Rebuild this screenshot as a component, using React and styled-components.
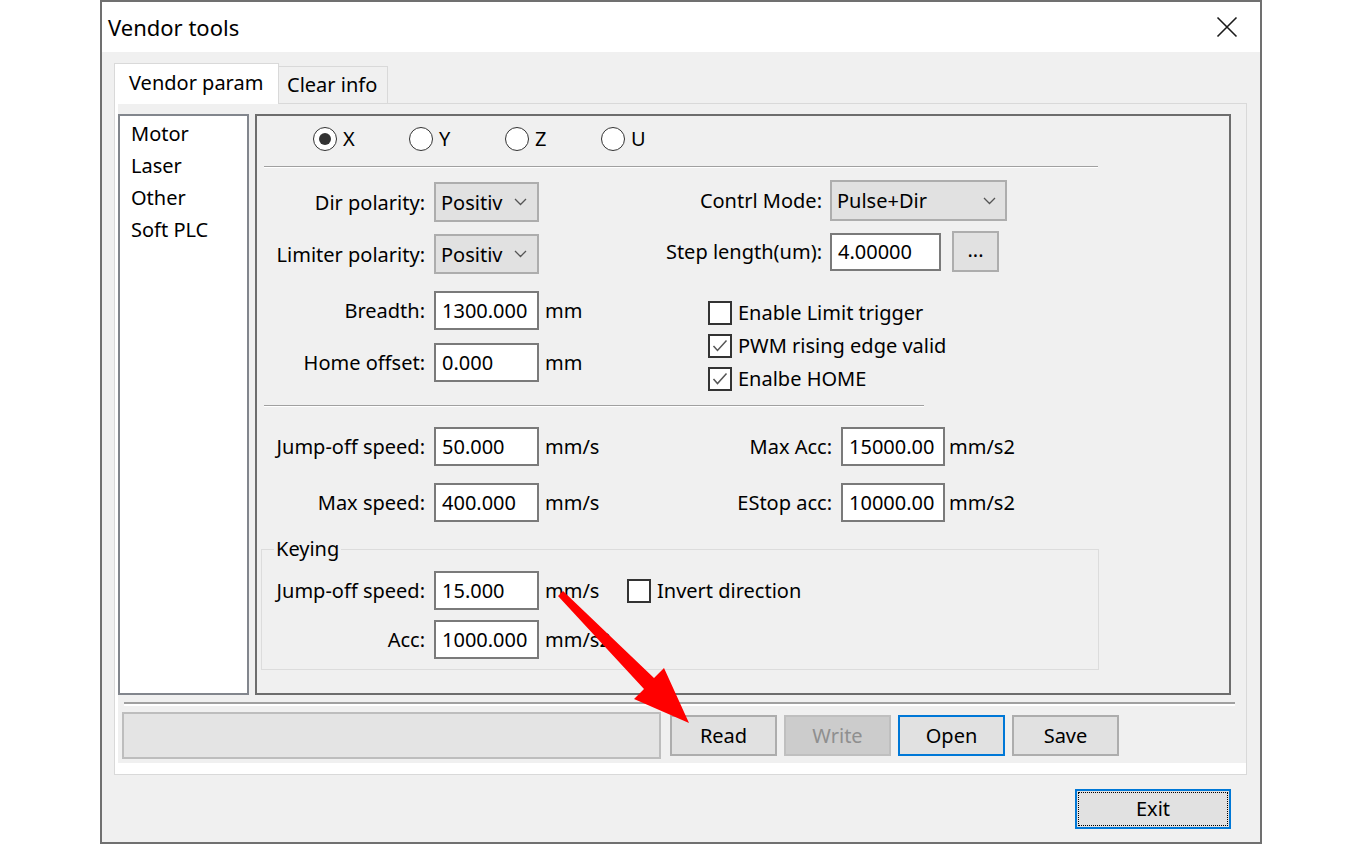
import React from 'react';
import styled, { createGlobalStyle } from 'styled-components';

const GlobalStyle = createGlobalStyle`
  html, body { margin: 0; padding: 0; background: #fff; }
  body {
    font-family: "Noto Sans", "Liberation Sans", sans-serif;
    font-size: 20px;
    color: #000;
  }
  * { box-sizing: border-box; }
`

const Page = styled.div`
  position: relative;
  width: 1362px;
  height: 844px;
  display: flex;
  justify-content: center;
  overflow: hidden;
`

const Window = styled.div`
  width: 1162px;
  height: 844px;
  border: 2px solid #707070;
  background: #f0f0f0;
  display: flex;
  flex-direction: column;
`

const TitleBar = styled.div`
  height: 50px;
  background: #fff;
  display: flex;
  align-items: center;
  justify-content: space-between;
  padding-left: 6px;
`

const Title = styled.div`
  font-size: 22px;
  line-height: 26px;
`

const CloseBtn = styled.div`
  width: 66px;
  height: 50px;
  display: flex;
  align-items: center;
  justify-content: center;
`

const Body = styled.div`
  flex: 1;
  display: flex;
  flex-direction: column;
  padding: 11px 13px 0 12px;
`

const TabStrip = styled.div`
  display: flex;
  align-items: flex-end;
  height: 40px;
`

const Tab = styled.div`
  position: relative;
  z-index: 1;
  height: ${p => (p.$active ? '41px' : '37px')};
  margin-bottom: ${p => (p.$active ? '-1px' : '0')};
  width: ${p => p.$w}px;
  padding-left: ${p => (p.$active ? '14px' : '8px')};
  padding-bottom: ${p => (p.$active ? '3px' : '0')};
  background: ${p => (p.$active ? '#fff' : '#f0f0f0')};
  border: 1px solid #d9d9d9;
  border-bottom: none;
  border-left: ${p => (p.$active ? '1px solid #d9d9d9' : 'none')};
  display: flex;
  align-items: center;
  line-height: 24px;
`

const TabPanel = styled.div`
  height: 672px;
  border: 1px solid #d9d9d9;
  background: #fff;
  padding: 0 0 11px 3px;
  display: flex;
`

const PanelInner = styled.div`
  flex: 1;
  background: #f0f0f0;
  display: flex;
  flex-direction: column;
  padding: 10px 15px 0 0;
`

const MainRow = styled.div`
  display: flex;
  gap: 6px;
  height: 581px;
`

const NavList = styled.div`
  width: 131px;
  background: #fff;
  border: 2px solid #82868d;
  padding: 2px 0 0 11px;
`

const NavItem = styled.div`
  line-height: 32px;
  white-space: nowrap;
`

const Group = styled.div`
  flex: 1;
  border: 2px solid #6d6d6d;
  display: flex;
  flex-direction: column;
`

const RadioRow = styled.div`
  display: flex;
  margin-top: 11px;
  padding-left: 56px;
  height: 24px;
`

const RadioItem = styled.div`
  width: 96px;
  display: flex;
  align-items: center;
`

const RadioCircle = styled.span`
  width: 24px;
  height: 24px;
  border-radius: 50%;
  border: 1.5px solid #333;
  background: #fff;
  display: flex;
  align-items: center;
  justify-content: center;
  flex-shrink: 0;

  &::after {
    content: '';
    width: 12px;
    height: 12px;
    border-radius: 50%;
    background: ${p => (p.$checked ? '#333' : 'transparent')};
  }
`

const RadioLabel = styled.span`
  margin-left: 6px;
  line-height: 24px;
`

const Separator = styled.div`
  margin-top: ${p => p.$mt}px;
  margin-left: 7px;
  width: ${p => p.$w}px;
  border-top: 1px solid #a0a0a0;
  border-bottom: 1px solid #fff;
`

const Section = styled.div`
  display: flex;
  margin-top: ${p => p.$mt || 0}px;
`

const Column = styled.div`
  width: ${p => (p.$w ? `${p.$w}px` : 'auto')};
  display: flex;
  flex-direction: column;
`

const FieldRow = styled.div`
  display: flex;
  align-items: center;
  height: ${p => p.$h || 40}px;
  margin-top: ${p => p.$mt || 0}px;
`

const Label = styled.span`
  width: ${p => p.$w}px;
  text-align: right;
  white-space: nowrap;
  margin-right: ${p => p.$gap || 9}px;
`

const Select = styled.div`
  width: ${p => p.$w}px;
  height: ${p => p.$h || 40}px;
  background: #e1e1e1;
  border: 2px solid #adadad;
  display: flex;
  align-items: center;
  padding-left: 5px;
`

const SelectText = styled.span`
  white-space: nowrap;
`

const Chevron = styled.svg`
  margin-left: auto;
  margin-right: ${p => p.$mr || 10}px;
`

const TextBox = styled.div`
  width: ${p => p.$w || 105}px;
  height: ${p => p.$h || 39}px;
  background: #fff;
  border: 2px solid #7a7a7a;
  display: flex;
  align-items: center;
  padding-left: 6px;
  white-space: nowrap;
  overflow: hidden;
`

const Unit = styled.span`
  margin-left: ${p => p.$ml || 6}px;
  width: ${p => (p.$w ? `${p.$w}px` : 'auto')};
  white-space: nowrap;
`

const SmallButton = styled.div`
  width: 47px;
  height: 41px;
  margin-left: 11px;
  background: #e1e1e1;
  border: 2px solid #adadad;
  display: flex;
  align-items: center;
  justify-content: center;
  padding-bottom: 4px;
`

const CheckList = styled.div`
  display: flex;
  flex-direction: column;
  gap: 10px;
  margin: 29px 0 0 108px;
`

const CheckRow = styled.label`
  display: flex;
  align-items: center;
  height: 23px;
  margin-left: ${p => p.$ml || 0}px;
`

const CheckBox = styled.span`
  width: 24px;
  height: 24px;
  border: 2px solid #333;
  background: #fff;
  flex-shrink: 0;
  display: flex;
  align-items: center;
  justify-content: center;
`

const CheckText = styled.span`
  margin-left: 6px;
  white-space: nowrap;
  line-height: 24px;
`

const Keying = styled.fieldset`
  margin: 15px 0 0 4px;
  width: 838px;
  padding: 10px 0 10px 0;
  border: 1px solid #dcdcdc;
`

const Legend = styled.legend`
  margin-left: 12px;
  padding: 0 2px;
  line-height: 24px;
`

const BottomSep = styled.div`
  margin: 7px -4px 0 6px;
  border-top: 2px solid #a0a0a0;
  border-bottom: 2px solid #fff;
`

const ActionRow = styled.div`
  display: flex;
  align-items: center;
  margin-top: 6px;
  padding-left: 4px;
`

const StatusBox = styled.div`
  width: 539px;
  height: 47px;
  background: #e4e4e4;
  border: 2px solid #bdbdbd;
  margin-right: 9px;
`

const Button = styled.div`
  width: ${p => p.$w || 107}px;
  height: ${p => p.$h || 41}px;
  margin-right: ${p => (p.$last ? 0 : 7)}px;
  background: ${p => (p.$disabled ? '#cccccc' : '#e1e1e1')};
  color: ${p => (p.$disabled ? '#8f8f8f' : '#000')};
  border: 2px solid ${p => (p.$focus ? '#0078d7' : p.$disabled ? '#bfbfbf' : '#adadad')};
  outline: ${p => (p.$dotted ? '1px dotted #000' : 'none')};
  outline-offset: -4px;
  display: flex;
  align-items: center;
  justify-content: center;
  line-height: 24px;
`

const Footer = styled.div`
  display: flex;
  justify-content: flex-end;
  margin-top: 14px;
  padding-right: 16px;
`

const ArrowLayer = styled.svg`
  position: absolute;
  left: 0;
  top: 0;
  pointer-events: none;
`

const Tick = () => (
  <svg width="16" height="14" viewBox="0 0 16 14">
    <polyline points="1.5,7 5.5,11.5 14.5,1.5" fill="none" stroke="#555" strokeWidth="1.5" />
  </svg>
)

const Down = ({ mr }) => (
  <Chevron $mr={mr} width="13" height="8" viewBox="0 0 13 8">
    <polyline points="1,1 6.5,6.5 12,1" fill="none" stroke="#555" strokeWidth="1.3" />
  </Chevron>
)

const Check = ({ checked, children, ml }) => (
  <CheckRow $ml={ml}>
    <CheckBox>{checked && <Tick />}</CheckBox>
    <CheckText>{children}</CheckText>
  </CheckRow>
)

const axes = ['X', 'Y', 'Z', 'U']

export default function App() {
  return (
    <Page>
      <GlobalStyle />
      <Window>
        <TitleBar>
          <Title>Vendor tools</Title>
          <CloseBtn>
            <svg width="22" height="22" viewBox="0 0 22 22">
              <path d="M1.5 1.5 L20.5 20.5 M20.5 1.5 L1.5 20.5" stroke="#1a1a1a" strokeWidth="1.6" />
            </svg>
          </CloseBtn>
        </TitleBar>
        <Body>
          <TabStrip>
            <Tab $active $w={165}>Vendor param</Tab>
            <Tab $w={109}>Clear info</Tab>
          </TabStrip>
          <TabPanel>
            <PanelInner>
              <MainRow>
                <NavList>
                  <NavItem>Motor</NavItem>
                  <NavItem>Laser</NavItem>
                  <NavItem>Other</NavItem>
                  <NavItem>Soft PLC</NavItem>
                </NavList>
                <Group>
                  <RadioRow>
                    {axes.map((a, i) => (
                      <RadioItem key={a}>
                        <RadioCircle $checked={i === 0} />
                        <RadioLabel>{a}</RadioLabel>
                      </RadioItem>
                    ))}
                  </RadioRow>
                  <Separator $mt={15} $w={834} />

                  <Section $mt={12}>
                    <Column $w={343}>
                      <FieldRow $mt={2}>
                        <Label $w={168}>Dir polarity:</Label>
                        <Select $w={105}>
                          <SelectText>Positiv</SelectText>
                          <Down />
                        </Select>
                      </FieldRow>
                      <FieldRow $mt={12}>
                        <Label $w={168}>Limiter polarity:</Label>
                        <Select $w={105}>
                          <SelectText>Positiv</SelectText>
                          <Down />
                        </Select>
                      </FieldRow>
                      <FieldRow $mt={16}>
                        <Label $w={168}>Breadth:</Label>
                        <TextBox>1300.000</TextBox>
                        <Unit>mm</Unit>
                      </FieldRow>
                      <FieldRow $mt={12}>
                        <Label $w={168}>Home offset:</Label>
                        <TextBox>0.000</TextBox>
                        <Unit>mm</Unit>
                      </FieldRow>
                    </Column>
                    <Column>
                      <FieldRow $h={41}>
                        <Label $w={222} $gap={8}>Contrl Mode:</Label>
                        <Select $w={177} $h={41}>
                          <SelectText>Pulse+Dir</SelectText>
                          <Down mr={9} />
                        </Select>
                      </FieldRow>
                      <FieldRow $h={41} $mt={10}>
                        <Label $w={222} $gap={8}>Step length(um):</Label>
                        <TextBox $w={111} $h={38}>4.00000</TextBox>
                        <SmallButton>...</SmallButton>
                      </FieldRow>
                      <CheckList>
                        <Check>Enable Limit trigger</Check>
                        <Check checked>PWM rising edge valid</Check>
                        <Check checked>Enalbe HOME</Check>
                      </CheckList>
                    </Column>
                  </Section>

                  <Separator $mt={15} $w={660} />

                  <Section>
                    <Column $w={343}>
                      <FieldRow $mt={19}>
                        <Label $w={168}>Jump-off speed:</Label>
                        <TextBox>50.000</TextBox>
                        <Unit>mm/s</Unit>
                      </FieldRow>
                      <FieldRow $mt={16}>
                        <Label $w={168}>Max speed:</Label>
                        <TextBox>400.000</TextBox>
                        <Unit>mm/s</Unit>
                      </FieldRow>
                    </Column>
                    <Column>
                      <FieldRow $mt={19}>
                        <Label $w={232}>Max Acc:</Label>
                        <TextBox $w={104}>15000.00</TextBox>
                        <Unit $ml={4}>mm/s2</Unit>
                      </FieldRow>
                      <FieldRow $mt={16}>
                        <Label $w={232}>EStop acc:</Label>
                        <TextBox $w={104}>10000.00</TextBox>
                        <Unit $ml={4}>mm/s2</Unit>
                      </FieldRow>
                    </Column>
                  </Section>

                  <Keying>
                    <Legend>Keying</Legend>
                    <FieldRow $h={39}>
                      <Label $w={163}>Jump-off speed:</Label>
                      <TextBox>15.000</TextBox>
                      <Unit $w={76}>mm/s</Unit>
                      <Check ml={6}>Invert direction</Check>
                    </FieldRow>
                    <FieldRow $h={39} $mt={10}>
                      <Label $w={163}>Acc:</Label>
                      <TextBox>1000.000</TextBox>
                      <Unit>mm/s2</Unit>
                    </FieldRow>
                  </Keying>
                </Group>
              </MainRow>
              <BottomSep />
              <ActionRow>
                <StatusBox />
                <Button>Read</Button>
                <Button $disabled>Write</Button>
                <Button $focus>Open</Button>
                <Button>Save</Button>
              </ActionRow>
            </PanelInner>
          </TabPanel>
          <Footer>
            <Button $w={156} $h={40} $focus $dotted $last>Exit</Button>
          </Footer>
        </Body>
      </Window>
      <ArrowLayer width="1362" height="844" viewBox="0 0 1362 844">
        <polygon
          points="558,596 563,591 654,678 664,668 689,723 634,699 644,689"
          fill="#ff0000"
        />
      </ArrowLayer>
    </Page>
  )
}
